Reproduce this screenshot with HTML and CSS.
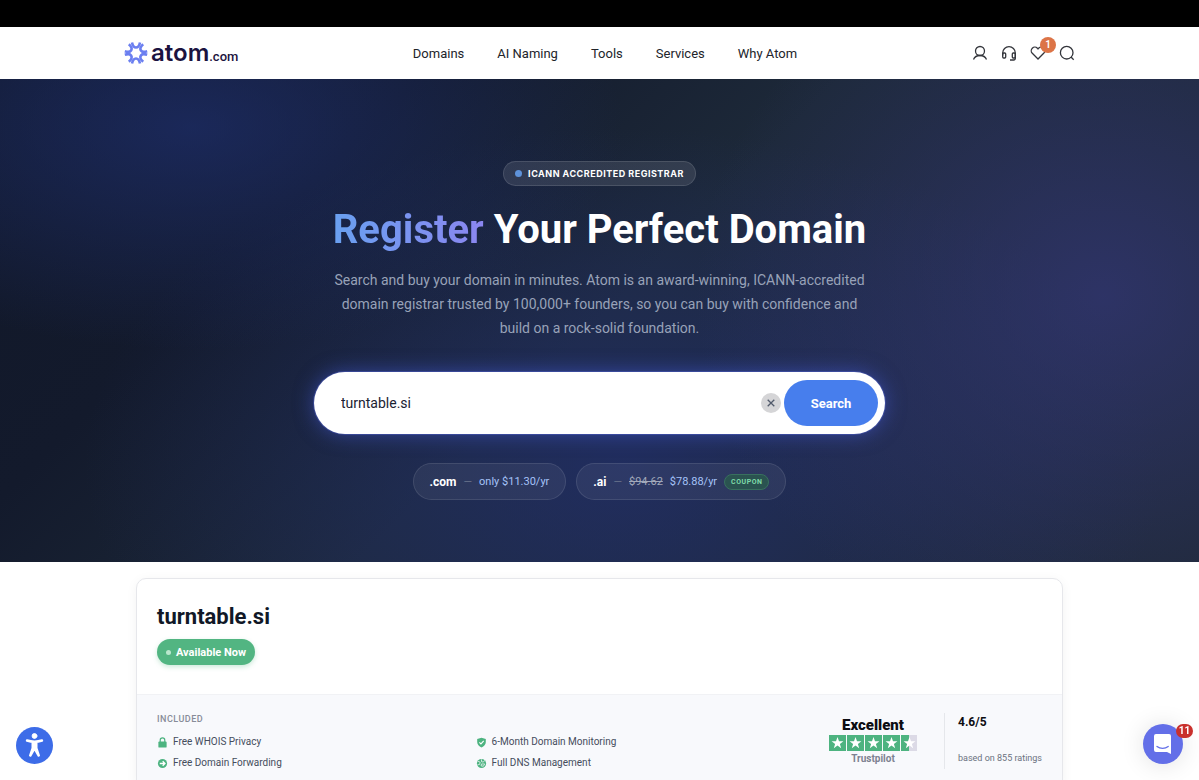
FILE: index.html
```html
<!DOCTYPE html>
<html lang="en">
<head>
  <meta charset="UTF-8">
  <meta name="viewport" content="width=device-width, initial-scale=1.0">
  <title>Register Your Perfect Domain | Atom.com</title>
  <link rel="stylesheet" href="styles.css">
</head>
<body>
  <div class="top-strip"></div>

  <header class="header">
    <div class="header-inner">
      <a href="#" class="logo" aria-label="atom.com">
        <svg width="24" height="24" viewBox="-12 -12 24 24" fill="none" stroke="#6b7ff0" stroke-width="2.600">
          <path id="ray" d="M-4 -10.600C-3.400 -7.500 -2 -5.500 0 -5.500S3.400 -7.500 4 -10.600"/>
          <use href="#ray" transform="rotate(60)"/>
          <use href="#ray" transform="rotate(120)"/>
          <use href="#ray" transform="rotate(180)"/>
          <use href="#ray" transform="rotate(240)"/>
          <use href="#ray" transform="rotate(300)"/>
        </svg>
        <span class="logo-name">atom</span><span class="logo-tld">.com</span>
      </a>

      <nav class="nav">
        <a href="#">Domains</a>
        <a href="#">AI Naming</a>
        <a href="#">Tools</a>
        <a href="#">Services</a>
        <a href="#">Why Atom</a>
      </nav>

      <div class="header-icons">
        <a href="#" aria-label="Account">
          <svg viewBox="0 0 16 16"><circle cx="8" cy="6" r="4.500"/><path d="M1.500 14.500C2.500 12 4.800 10.500 8 10.500s5.500 1.500 6.500 4"/></svg>
        </a>
        <a href="#" aria-label="Support">
          <svg viewBox="0 0 16 16"><path d="M1.700 10.500V8a6.300 6.300 0 0 1 12.600 0v5.500a1.500 1.500 0 0 1-1.500 1.500H9"/><rect x="1.700" y="8" width="3" height="5" rx="1"/><rect x="11.300" y="8" width="3" height="5" rx="1"/></svg>
        </a>
        <a href="#" class="favorites" aria-label="Favorites">
          <svg viewBox="0 0 16 16"><path d="M8 14L2.300 8.300A3.600 3.600 0 0 1 7.400 3.200L8 3.900l.6-.7a3.600 3.600 0 0 1 5.100 5.100z"/></svg>
          <span class="count">1</span>
        </a>
        <a href="#" aria-label="Search">
          <svg viewBox="0 0 16 16"><circle cx="7.700" cy="7.700" r="6.300"/><path d="M12 12l2.700 2.700"/></svg>
        </a>
      </div>
    </div>
  </header>

  <section class="hero">
    <div class="accredited"><span class="dot"></span>ICANN ACCREDITED REGISTRAR</div>
    <h1><span class="highlight">Register</span> Your Perfect Domain</h1>
    <p class="intro">Search and buy your domain in minutes. Atom is an award-winning, ICANN-accredited<br> domain registrar trusted by 100,000+ founders, so you can buy with confidence and<br> build on a rock-solid foundation.</p>

    <form class="search">
      <input type="text" aria-label="Domain name" value="turntable.si">
      <button type="reset" class="clear" aria-label="Clear">
        <svg width="8" height="8" viewBox="0 0 8 8"><path d="M.7.7l6.600 6.600M7.300.7L.7 7.300"/></svg>
      </button>
      <button type="submit" class="submit">Search</button>
    </form>

    <div class="prices">
      <a href="#" class="price"><strong>.com</strong><span class="dash">—</span><span>only $11.30/yr</span></a>
      <a href="#" class="price"><strong>.ai</strong><span class="dash">—</span><s>$94.62</s><span>$78.88/yr</span><em class="coupon">COUPON</em></a>
    </div>
  </section>

  <main class="results">
    <article class="card">
      <div class="card-top">
        <h2>turntable.si</h2>
        <span class="available"><span class="dot"></span>Available Now</span>
      </div>

      <div class="card-bottom">
        <div class="included">
          <h3>INCLUDED</h3>
          <ul>
            <li>
              <svg viewBox="0 0 12 12"><path fill="none" stroke="#4db380" stroke-width="1.300" d="M3.500 6V3.500a2.500 2.500 0 0 1 5 0V6"/><rect x="1.500" y="5" width="9" height="6.500" rx="1" fill="#4db380"/></svg>
              Free WHOIS Privacy
            </li>
            <li>
              <svg viewBox="0 0 12 12"><path fill="#4db380" d="M6 .8l4.700 1.400v3.300c0 3-2 4.800-4.700 6-2.700-1.200-4.700-3-4.700-6V2.200z"/><path fill="none" stroke="#fff" stroke-width="1.200" d="M3.700 5.800l1.700 1.700 3-3.200"/></svg>
              6-Month Domain Monitoring
            </li>
            <li>
              <svg viewBox="0 0 12 12"><circle cx="6" cy="6" r="5" fill="#4db380"/><path fill="none" stroke="#fff" stroke-width="1.400" d="M3 6h5.500M6.200 3.500L8.700 6 6.200 8.500"/></svg>
              Free Domain Forwarding
            </li>
            <li>
              <svg viewBox="0 0 12 12"><circle cx="6" cy="6" r="5" fill="#4db380"/><path fill="none" stroke="#f8f9fc" stroke-width=".8" d="M2 3.500l2.500 1L4 7 1.500 7.500M6 1.500v2.500l2 .5 1.500-2M6 6.500h3.500L8 9 5.500 8.500z"/></svg>
              Full DNS Management
            </li>
          </ul>
        </div>

        <div class="rating">
          <div class="trust">
            <strong>Excellent</strong>
            <svg class="stars" width="88" height="16" viewBox="0 0 88 16" role="img" aria-label="4.6 out of 5 stars">
              <path fill="#4db380" d="M0 0h17v16H0zM18 0h17v16H18zM36 0h17v16H36zM54 0h17v16H54zM72 0h8v16h-8z"/>
              <path fill="#dcdae6" d="M80 0h8v16h-8z"/>
              <g fill="#fff">
                <path id="star" d="M8.500 2l1.500 4.200h4.400l-3.500 2.700 1.300 4.300-3.700-2.600-3.700 2.600 1.300-4.300L2.600 6.200H7z"/>
                <use href="#star" x="18"/>
                <use href="#star" x="36"/>
                <use href="#star" x="54"/>
                <use href="#star" x="72"/>
              </g>
            </svg>
            <span>Trustpilot</span>
          </div>
          <div class="score">
            <strong>4.6/5</strong>
            <span>based on 855 ratings</span>
          </div>
        </div>
      </div>
    </article>
  </main>

  <button class="accessibility" aria-label="Accessibility options">
    <svg width="37" height="37" viewBox="0 0 37 37" fill="#fff" stroke="#fff" stroke-linecap="round" stroke-linejoin="round">
      <circle cx="18.500" cy="9" r="2.400"/>
      <path fill="none" stroke-width="2.400" d="M11 13.500c5 1.500 10 1.500 15 0"/>
      <path stroke-width="2" d="M16.500 15h4v6l2.500 7.500-.5.300-4-7-4 7-.5-.3 2.500-7.500z"/>
    </svg>
  </button>

  <button class="chat" aria-label="Open chat">
    <svg width="20" height="22" viewBox="0 0 20 22">
      <path fill="#fff" d="M3 1h13a2 2 0 0 1 2 2v18l-4-2H3a2 2 0 0 1-2-2V3a2 2 0 0 1 2-2z"/>
      <path fill="none" stroke="#636fe8" stroke-width="1.300" stroke-linecap="round" d="M4 13.500c3.200 2.600 8 2.600 11.200 0"/>
    </svg>
    <span class="chat-count">11</span>
  </button>
</body>
</html>
```
FILE: styles.css
```css
* {
  box-sizing: border-box;
}

body {
  margin: 0;
  font-family: Roboto, "Open Sans", sans-serif;
  color: #111827;
  background-color: #fff;
  overflow: hidden;
}

a {
  color: inherit;
  text-decoration: none;
}

input,
button {
  font-family: inherit;
  border: none;
}

button {
  cursor: pointer;
}

.top-strip {
  height: 27px;
  background-color: #000;
}

/* Header */
.header {
  height: 52px;
  padding: 0 124px;
}

.header-inner {
  height: 100%;
  display: grid;
  grid-template-columns: 1fr auto 1fr;
  align-items: center;
}

.logo {
  display: flex;
  align-items: baseline;
  color: #1b1340;
}

.logo svg {
  align-self: center;
  margin-right: 3px;
}

.logo-name {
  font-family: Inter, sans-serif;
  font-size: 24px;
  line-height: 28px;
  font-weight: 600;
}

.logo-tld {
  font-size: 13px;
  font-weight: 500;
}

.nav {
  display: flex;
  gap: 33px;
  padding-left: 11px;
  font-size: 13px;
  color: #22242a;
}

.header-icons {
  display: flex;
  justify-content: flex-end;
  gap: 13px;
}

.header-icons a {
  position: relative;
  display: flex;
}

.header-icons svg {
  width: 16px;
  height: 16px;
  fill: none;
  stroke: #33353b;
  stroke-width: 1.3;
}

.count {
  position: absolute;
  top: -8px;
  right: -10px;
  width: 16px;
  height: 16px;
  border-radius: 50%;
  background-color: #dc7447;
  color: #fff;
  font-size: 10px;
  line-height: 16px;
  font-weight: 600;
  text-align: center;
}

/* Hero */
.hero {
  display: flex;
  flex-direction: column;
  align-items: center;
  padding: 82px 20px 62px;
  color: #fff;
  text-align: center;
  background:
    radial-gradient(ellipse 36% 46% at 16% 10%, rgba(32, 50, 120, 0.6), transparent),
    radial-gradient(ellipse 34% 75% at 92% 45%, rgba(56, 58, 132, 0.6), transparent),
    radial-gradient(ellipse 45% 70% at 52% 80%, rgba(35, 48, 120, 0.6), transparent),
    linear-gradient(135deg, #111829 0%, #131a2c 25%, #1d2939 50%, #1f2937 100%);
}

.dot {
  width: 7px;
  height: 7px;
  border-radius: 50%;
  background-color: #5e92da;
}

.accredited {
  display: flex;
  align-items: center;
  gap: 6px;
  height: 25px;
  padding: 0 11px;
  border: 1px solid rgba(255, 255, 255, 0.12);
  border-radius: 13px;
  background-color: rgba(255, 255, 255, 0.1);
  font-family: Inter, sans-serif;
  font-size: 9px;
  font-weight: 700;
  letter-spacing: 0.5px;
}

.hero h1 {
  margin: 20px 0 14px;
  font-size: 40px;
  line-height: 48px;
  font-weight: 700;
}

.highlight {
  background: linear-gradient(90deg, #69a0f0, #8b86f0);
  background-clip: text;
  -webkit-background-clip: text;
  color: transparent;
}

.intro {
  margin: 0;
  font-size: 14px;
  line-height: 24px;
  color: #98a2b8;
}

.search {
  display: flex;
  align-items: center;
  width: 100%;
  max-width: 571px;
  margin: 32px 0 29px;
  padding: 8px 7px 8px 27px;
  border-radius: 32px;
  background-color: #fff;
  box-shadow: 0 0 0 1px rgba(88, 105, 220, 0.35), 0 0 20px rgba(76, 100, 240, 0.5);
}

.search input {
  flex: 1;
  min-width: 0;
  padding: 0;
  outline: none;
  background: none;
  color: #1a2232;
  font-size: 14px;
}

.clear {
  display: flex;
  align-items: center;
  justify-content: center;
  width: 20px;
  height: 20px;
  margin-right: 3px;
  padding: 0;
  border-radius: 50%;
  background-color: #d5d5d7;
}

.clear svg {
  stroke: #515a6b;
  stroke-width: 1.3;
}

.submit {
  width: 94px;
  height: 46px;
  border-radius: 23px;
  background-color: #477eed;
  color: #fff;
  font-size: 13px;
  font-weight: 700;
}

.prices {
  display: flex;
  gap: 10px;
}

.price {
  display: flex;
  align-items: center;
  gap: 7px;
  height: 37px;
  padding: 0 16px;
  border: 1px solid rgba(255, 255, 255, 0.1);
  border-radius: 19px;
  background-color: rgba(255, 255, 255, 0.06);
  color: #a5c3f8;
  font-size: 11px;
}

.price strong {
  color: #fff;
  font-size: 12px;
}

.price s {
  color: #a2a9ba;
}

.dash {
  color: #66708a;
}

.coupon {
  padding: 0 6px;
  border: 1px solid #38705e;
  border-radius: 8px;
  background-color: #2a5350;
  color: #7edba9;
  font-size: 7px;
  line-height: 14px;
  font-style: normal;
  font-weight: 700;
  letter-spacing: 0.5px;
}

/* Search result */
.results {
  padding: 16px 136px 0;
}

.card {
  border: 1px solid #e6e7eb;
  border-radius: 10px;
  box-shadow: 0 2px 12px rgba(0, 0, 0, 0.05);
  overflow: hidden;
}

.card-top {
  display: flex;
  flex-direction: column;
  align-items: flex-start;
  gap: 8px;
  padding: 24px 20px 29px;
}

.card h2 {
  margin: 0;
  font-size: 22px;
  line-height: 28px;
  font-weight: 700;
}

.available {
  display: flex;
  align-items: center;
  gap: 5px;
  height: 26px;
  padding: 0 9px;
  border-radius: 13px;
  background-color: #52b582;
  box-shadow: 0 2px 5px rgba(82, 181, 130, 0.3);
  color: #fff;
  font-size: 11px;
  font-weight: 700;
}

.available .dot {
  width: 5px;
  height: 5px;
  background-color: #b9e7cd;
}

.card-bottom {
  display: flex;
  justify-content: space-between;
  padding: 18px 20px;
  border-top: 1px solid #f1f2f5;
  background-color: #f8f9fc;
}

.included {
  width: 72%;
}

.included h3 {
  margin: 0 0 9px;
  color: #878c98;
  font-size: 9px;
  line-height: 12px;
  font-weight: 500;
  letter-spacing: 0.5px;
}

.included ul {
  display: grid;
  grid-template-columns: 1fr 1fr;
  gap: 5px 0;
  margin: 0;
  padding: 0;
  list-style: none;
}

.included li {
  display: flex;
  align-items: center;
  gap: 5px;
  color: #454d5c;
  font-size: 10px;
  line-height: 16px;
}

.included svg {
  width: 11px;
  height: 11px;
}

.rating {
  display: flex;
  align-items: flex-start;
}

.trust {
  display: flex;
  flex-direction: column;
  align-items: center;
  padding: 2px 27px 2px 0;
  border-right: 1px solid #e5e7eb;
  color: #7d8190;
  font-size: 10px;
  line-height: 16px;
  font-weight: 700;
}

.trust strong {
  color: #0d0d12;
  font-size: 15px;
  line-height: 20px;
}

.score {
  display: flex;
  flex-direction: column;
  gap: 18px;
  padding-left: 13px;
  color: #6b7280;
  font-size: 9px;
  line-height: 18px;
  white-space: nowrap;
}

.score strong {
  color: #0d0d12;
  font-size: 12px;
}

/* Floating buttons */
.accessibility {
  position: fixed;
  left: 16px;
  bottom: 16px;
  width: 37px;
  height: 37px;
  padding: 0;
  border-radius: 50%;
  background-color: #3d6ce8;
}

.accessibility svg {
  display: block;
}

.chat {
  position: fixed;
  right: 16px;
  bottom: 16px;
  display: flex;
  align-items: center;
  justify-content: center;
  width: 40px;
  height: 40px;
  border-radius: 50%;
  background-color: #636fe8;
  box-shadow: 0 1px 24px rgba(0, 0, 0, 0.12);
}

.chat svg {
  flex: none;
}

.chat-count {
  position: absolute;
  top: 0;
  right: -10px;
  width: 17px;
  height: 14px;
  border-radius: 7px;
  background-color: #c9302c;
  color: #fff;
  font-size: 10px;
  line-height: 14px;
  font-weight: 700;
}
```
